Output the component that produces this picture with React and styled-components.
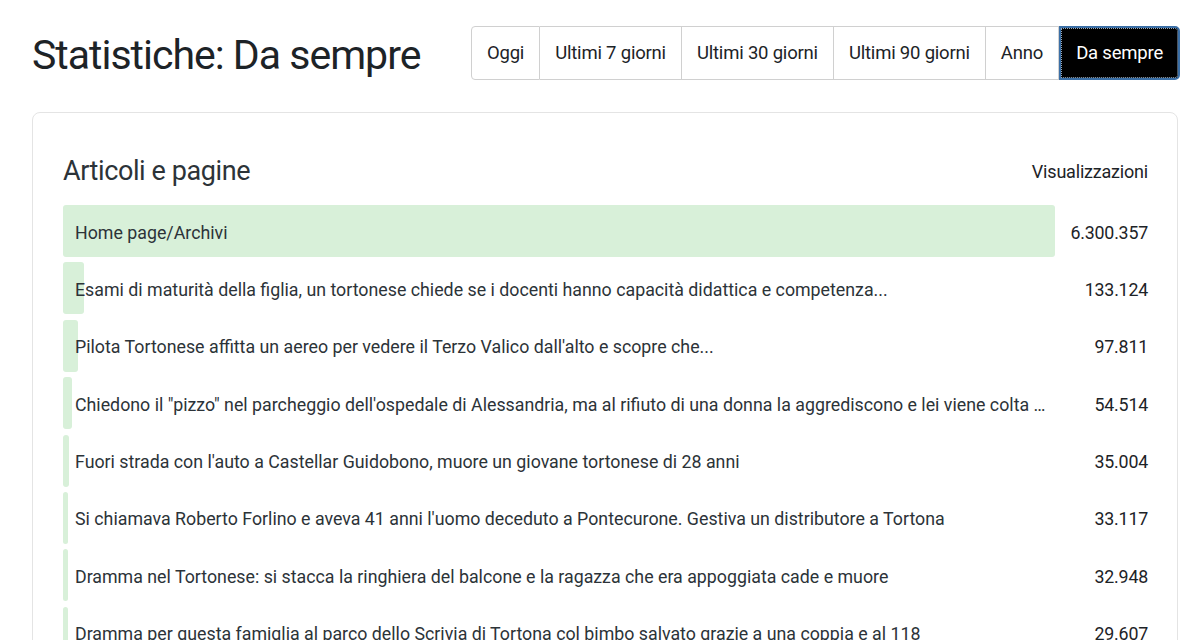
import React from 'react'
import styled, { createGlobalStyle } from 'styled-components'

const GlobalStyle = createGlobalStyle`
  html, body { margin: 0; padding: 0; background: #fff; }
  body {
    font-family: Roboto, "Liberation Sans", sans-serif;
    color: #1e1e1e;
  }
`

const Page = styled.div`
  width: 1200px;
  height: 640px;
  overflow: hidden;
  box-sizing: border-box;
  padding: 26px 20px 0 32px;
`

const TopBar = styled.div`
  display: flex;
  align-items: center;
  justify-content: space-between;
  height: 54px;
`

const Title = styled.h1`
  margin: 0;
  padding-top: 3px;
  font-weight: 400;
  font-size: 41px;
  letter-spacing: -1px;
  white-space: nowrap;
  color: #1d2327;
`

const Periods = styled.div`
  display: flex;
  height: 54px;
`

const PeriodButton = styled.button`
  font-family: inherit;
  font-size: 18.5px;
  letter-spacing: -0.2px;
  white-space: nowrap;
  padding: 0 15px;
  height: 54px;
  background: ${p => (p.$active ? '#000' : '#fff')};
  color: ${p => (p.$active ? '#fff' : '#1d2327')};
  border: 1px solid #d0d0d0;
  border-left-width: ${p => (p.$first ? '1px' : '0')};
  border-radius: ${p => (p.$first ? '4px 0 0 4px' : '0')};
  cursor: pointer;
  ${p => p.$active && `
    border: 2px solid #3b6fa6;
    border-radius: 0 5px 5px 0;
    outline: 1px dotted #9ab;
    outline-offset: -3px;
  `}
`

const Card = styled.div`
  margin: 32px 2px 0 0;
  border: 1px solid #e4e4e4;
  border-radius: 8px;
  padding: 40px 29px 0 30px;
  height: 560px;
  box-sizing: border-box;
`

const CardHead = styled.div`
  display: flex;
  align-items: center;
  justify-content: space-between;
  height: 36px;
  margin-bottom: 16px;
`

const CardTitle = styled.h2`
  margin: 0;
  font-weight: 400;
  font-size: 27px;
  letter-spacing: -0.4px;
  color: #2c3338;
`

const ColumnLabel = styled.span`
  font-size: 18px;
  letter-spacing: -0.2px;
  color: #1d2327;
`

const List = styled.ul`
  list-style: none;
  margin: 0;
  padding: 0;
  display: flex;
  flex-direction: column;
  gap: 5.4px;
`

const Row = styled.li`
  display: grid;
  grid-template-columns: 1fr 93px;
  height: 52px;
  align-items: center;
`

const Label = styled.div`
  position: relative;
  height: 100%;
  display: flex;
  align-items: center;
  min-width: 0;
`

const Bar = styled.div`
  position: absolute;
  left: 0;
  top: 0;
  bottom: 0;
  background: #d8f0d9;
  border-radius: 3px;
`

const LabelText = styled.span`
  position: relative;
  padding: 2px 6px 0 12px;
  font-size: 17.8px;
  color: #2c3338;
  white-space: nowrap;
  overflow: hidden;
  text-overflow: ellipsis;
`

const Count = styled.div`
  text-align: right;
  padding-top: 2px;
  font-size: 17.8px;
  letter-spacing: -0.2px;
  color: #1d2327;
`

const periods = ['Oggi', 'Ultimi 7 giorni', 'Ultimi 30 giorni', 'Ultimi 90 giorni', 'Anno', 'Da sempre']

const posts = [
  ['Home page/Archivi', 6300357],
  ['Esami di maturità della figlia, un tortonese chiede se i docenti hanno capacità didattica e competenza...', 133124],
  ["Pilota Tortonese affitta un aereo per vedere il Terzo Valico dall'alto e scopre che...", 97811],
  ['Chiedono il "pizzo" nel parcheggio dell\'ospedale di Alessandria, ma al rifiuto di una donna la aggrediscono e lei viene colta da malore', 54514],
  ["Fuori strada con l'auto a Castellar Guidobono, muore un giovane tortonese di 28 anni", 35004],
  ["Si chiamava Roberto Forlino e aveva 41 anni l'uomo deceduto a Pontecurone. Gestiva un distributore a Tortona", 33117],
  ['Dramma nel Tortonese: si stacca la ringhiera del balcone e la ragazza che era appoggiata cade e muore', 32948],
  ['Dramma per questa famiglia al parco dello Scrivia di Tortona col bimbo salvato grazie a una coppia e al 118', 29607],
]

const max = posts[0][1]
const fmt = n => n.toString().replace(/\B(?=(\d{3})+(?!\d))/g, '.')

export default function App() {
  return (
    <>
      <GlobalStyle />
      <Page>
        <TopBar>
          <Title>Statistiche: Da sempre</Title>
          <Periods>
            {periods.map((p, i) => (
              <PeriodButton key={p} $first={i === 0} $active={p === 'Da sempre'}>{p}</PeriodButton>
            ))}
          </Periods>
        </TopBar>
        <Card>
          <CardHead>
            <CardTitle>Articoli e pagine</CardTitle>
            <ColumnLabel>Visualizzazioni</ColumnLabel>
          </CardHead>
          <List>
            {posts.map(([title, views]) => (
              <Row key={title}>
                <Label>
                  <Bar style={{ width: `${Math.max((views / max) * 100, 0.4)}%` }} />
                  <LabelText>{title}</LabelText>
                </Label>
                <Count>{fmt(views)}</Count>
              </Row>
            ))}
          </List>
        </Card>
      </Page>
    </>
  )
}
